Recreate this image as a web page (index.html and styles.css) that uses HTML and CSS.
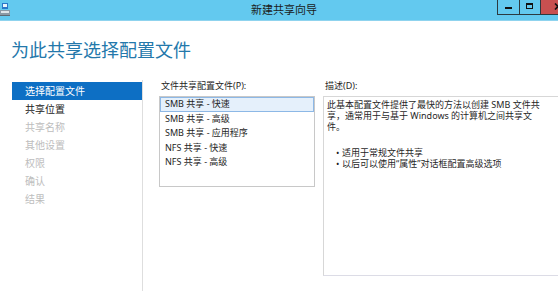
FILE: index.html
```html
<!DOCTYPE html>
<html lang="zh-CN">
<head>
<meta charset="utf-8">
<title>新建共享向导</title>
<link rel="stylesheet" href="styles.css">
</head>
<body>
<div class="window">
  <div class="titlebar">
    <svg class="app-icon" width="10" height="13" viewBox="0 0 10 13">
      <rect x="2" y="0" width="6" height="6" fill="#2a78c8"/>
      <rect x="3" y="1" width="4" height="3" fill="#e8f4fc"/>
      <rect x="0" y="7" width="10" height="5" fill="#8a9aa6"/>
      <rect x="1" y="8" width="8" height="2" fill="#dfe6eb"/>
      <rect x="0" y="12" width="10" height="1" fill="#5d6b75"/>
    </svg>
    <div class="title">新建共享向导</div>
    <div class="controls">
      <div class="btn min"><span class="min-glyph"></span></div>
      <div class="btn max"><span class="max-glyph"></span></div>
      <div class="btn close">
        <svg class="close-glyph" width="8" height="7" viewBox="0 0 8 7">
          <path d="M1 0.5 L7 6.5 M7 0.5 L1 6.5" stroke="#111" stroke-width="1.6"/>
        </svg>
      </div>
    </div>
  </div>

  <h1 class="heading">为此共享选择配置文件</h1>

  <div class="content">
    <nav class="steps">
      <div class="step active">选择配置文件</div>
      <div class="step current">共享位置</div>
      <div class="step disabled">共享名称</div>
      <div class="step disabled">其他设置</div>
      <div class="step disabled">权限</div>
      <div class="step disabled">确认</div>
      <div class="step disabled">结果</div>
    </nav>

    <section class="profiles">
      <div class="label">文件共享配置文件(P):</div>
      <div class="listbox">
        <div class="item selected">SMB 共享 - 快速</div>
        <div class="item">SMB 共享 - 高级</div>
        <div class="item">SMB 共享 - 应用程序</div>
        <div class="item">NFS 共享 - 快速</div>
        <div class="item">NFS 共享 - 高级</div>
      </div>
    </section>

    <section class="desc">
      <div class="label">描述(D):</div>
      <div class="descbox">
        <p class="para">此基本配置文件提供了最快的方法以创建 SMB 文件共<br>享，通常用于与基于 Windows 的计算机之间共享文<br>件。</p>
        <ul class="bullets">
          <li>适用于常规文件共享</li>
          <li>以后可以使用“属性”对话框配置高级选项</li>
        </ul>
      </div>
    </section>
  </div>
</div>
</body>
</html>
```

FILE: styles.css
```css
html, body {
  margin: 0;
  padding: 0;
  width: 558px;
  height: 291px;
  overflow: hidden;
  background: #ffffff;
  font-family: "Noto Sans", "Noto Sans CJK SC", sans-serif;
}

.window {
  width: 558px;
  height: 291px;
  overflow: hidden;
}

.titlebar {
  display: flex;
  align-items: flex-start;
  height: 20px;
  background: #63c9ef;
  border-bottom: 1px solid #8fd3ee;
}

.app-icon {
  flex: none;
  margin-top: 3px;
}

.title {
  flex: 1;
  text-align: center;
  padding-left: 61px;
  font-size: 11px;
  line-height: 20px;
  color: #1b1b1b;
  white-space: nowrap;
}

.controls {
  display: flex;
  flex: none;
}

.btn {
  height: 14px;
  border-left: 1px solid #2c3a40;
  border-bottom: 1px solid #2c3a40;
  display: flex;
  align-items: center;
  justify-content: center;
}

.btn.min { width: 21px; }
.btn.max { width: 20px; }
.btn.close {
  width: 17px;
  background: #c75050;
  justify-content: flex-start;
  overflow: hidden;
}

.min-glyph {
  display: block;
  width: 7px;
  height: 2px;
  background: #111;
  margin-top: 1px;
}

.max-glyph {
  display: block;
  width: 5px;
  height: 3px;
  border: 1px solid #111;
  border-top-width: 2px;
  margin-right: 1px;
  margin-top: -2px;
}

.close-glyph {
  flex: none;
  margin-left: 13px;
  margin-top: -2px;
}

.heading {
  margin: 17px 0 0 11px;
  font-size: 18px;
  line-height: 24px;
  font-weight: normal;
  color: #2478ab;
  white-space: nowrap;
}

.content {
  display: flex;
  margin-top: 18px;
  height: 211px;
}

.steps {
  flex: none;
  margin-left: 12px;
  width: 130px;
  padding-top: 2px;
  border-right: 1px solid #dedede;
}

.step {
  height: 18px;
  line-height: 18px;
  padding-left: 13px;
  font-size: 10px;
  white-space: nowrap;
}

.step.active {
  background: #0d6fc4;
  color: #ffffff;
}

.step.current { color: #222222; }
.step.disabled { color: #bdbdbd; }

.label {
  font-size: 9px;
  line-height: 12px;
  padding-left: 2px;
  color: #1e1e1e;
  white-space: nowrap;
}

.profiles {
  flex: none;
  margin-left: 16px;
  width: 156px;
}

.listbox {
  margin-top: 4px;
  height: 91px;
  box-sizing: border-box;
  border: 1px solid #c8c8c8;
}

.item {
  height: 14.6px;
  line-height: 14.6px;
  padding-left: 5px;
  font-size: 9px;
  color: #1e1e1e;
  white-space: nowrap;
}

.item.selected {
  background: #e5f0fb;
  box-shadow: inset 0 0 0 1px #8db8e6;
}

.desc {
  flex: none;
  margin-left: 8px;
  width: 260px;
}

.descbox {
  margin-top: 4px;
  height: 180px;
  box-sizing: border-box;
  border: 1px solid #d7d7d7;
  border-bottom-color: #dcdce6;
  padding: 2px 4px 0 3px;
  font-size: 9px;
  line-height: 11px;
  color: #1f1f1f;
}

.para {
  margin: 0;
  white-space: nowrap;
}

.bullets {
  list-style: none;
  margin: 15px 0 0 0;
  padding: 0;
}

.bullets li {
  display: flex;
  padding-left: 9px;
  white-space: nowrap;
}

.bullets li::before {
  content: "•";
  width: 6px;
  flex: none;
}
```
